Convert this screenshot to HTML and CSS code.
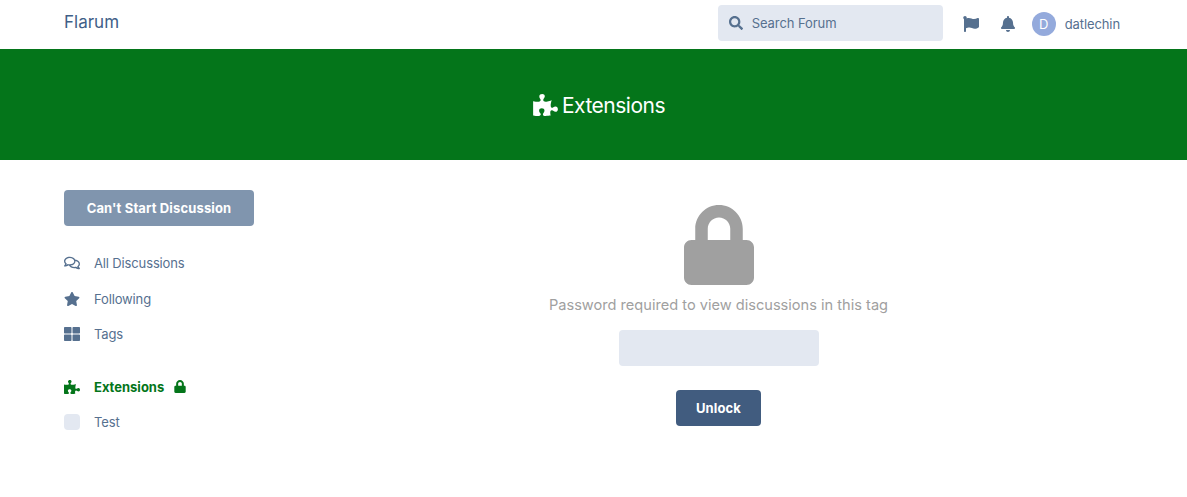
FILE: index.html

```html
<!doctype html>
<html lang="en">
<head>
  <meta charset="UTF-8">
  <title>Extensions - Flarum</title>
  <link rel="stylesheet" href="styles.css">
</head>
<body>
  <header class="header">
    <a class="brand" href="#">Flarum</a>
    <div class="header-right">
      <div class="search">
        <svg class="search-icon" viewBox="0 0 512 512"><path d="M505 442.7L405.3 343c-4.5-4.5-10.6-7-17-7H372c27.6-35.3 44-79.7 44-128C416 93.1 322.9 0 208 0S0 93.1 0 208s93.1 208 208 208c48.3 0 92.7-16.4 128-44v16.3c0 6.4 2.5 12.5 7 17l99.7 99.7c9.4 9.4 24.6 9.4 33.9 0l28.3-28.3c9.4-9.4 9.4-24.6.1-34zM208 336c-70.7 0-128-57.2-128-128 0-70.7 57.2-128 128-128 70.7 0 128 57.2 128 128 0 70.7-57.2 128-128 128z"/></svg>
        <span>Search Forum</span>
      </div>
      <svg class="header-icon flag" viewBox="0 0 512 512"><path d="M349.565 98.783C295.978 98.783 251.721 64 184.348 64c-24.955 0-47.309 4.384-68.045 12.013a55.947 55.947 0 0 0 3.586-23.562C118.117 24.015 94.806 1.206 66.338.048 34.345-1.254 8 24.296 8 56c0 19.026 9.497 35.825 24 45.945V488c0 13.255 10.745 24 24 24h16c13.255 0 24-10.745 24-24v-94.4c28.311-12.064 63.582-22.122 114.435-22.122 53.588 0 97.844 34.783 165.217 34.783 48.169 0 86.667-16.294 122.505-40.858C506.84 359.452 512 349.571 512 339.045v-243.1c0-23.393-24.269-38.87-45.485-29.016-34.338 15.948-76.454 31.854-116.95 31.854z"/></svg>
      <svg class="header-icon bell" viewBox="0 0 448 512"><path d="M224 512c35.32 0 63.97-28.65 63.97-64H160.03c0 35.35 28.65 64 63.97 64zm215.39-149.71c-19.32-20.76-55.47-51.99-55.47-154.29 0-77.7-54.48-139.9-127.94-155.16V32c0-17.67-14.32-32-31.98-32s-31.98 14.33-31.98 32v20.84C118.56 68.1 64.08 130.3 64.08 208c0 102.3-36.15 133.53-55.47 154.29-6 6.45-8.66 14.16-8.61 21.71.11 16.4 12.98 32 32.1 32h383.8c19.12 0 32.01-15.6 32.1-32 .05-7.55-2.61-15.27-8.61-21.71z"/></svg>
      <div class="user">
        <span class="avatar">D</span>
        <span class="username">datlechin</span>
      </div>
    </div>
  </header>

  <section class="hero">
    <h1 class="hero-title">
      <svg class="hero-icon" viewBox="0 0 576 512"><path d="M519.442 288.651c-41.519 0-59.5 31.593-82.058 31.593C377.409 320.244 432 144 432 144s-196.288 80-196.288-3.297c0-35.827 36.288-46.25 36.288-85.985C272 19.216 243.885 0 210.539 0c-34.654 0-66.366 18.891-66.366 56.346 0 41.364 31.711 59.277 31.711 81.75C175.885 207.719 0 166.758 0 166.758v333.237s178.635 41.047 178.635-28.662c0-22.473-40-40.107-40-81.471 0-37.456 29.25-56.346 63.577-56.346 33.673 0 61.788 19.216 61.788 54.717 0 39.735-36.288 50.158-36.288 85.985 0 60.803 129.675 25.73 181.23 25.73 0 0-34.725-120.101 25.827-120.101 35.962 0 46.423 36.152 86.308 36.152C556.712 416 576 387.99 576 354.443c0-34.199-18.962-65.792-56.558-65.792z"/></svg>
      Extensions
    </h1>
  </section>

  <main class="main">
    <aside class="sidebar">
      <button class="start-btn">Can't Start Discussion</button>
      <ul class="nav">
        <li class="nav-item">
          <svg class="nav-icon" viewBox="0 0 576 512"><path d="M532 386.2c27.5-27.1 44-61.1 44-98.2 0-80-76.5-146.1-176.2-157.9C368.3 72.5 294.3 32 208 32 93.1 32 0 103.6 0 192c0 37 16.5 71 44 98.2-15.3 30.7-37.3 54.5-37.7 54.9-6.3 6.7-8.1 16.5-4.4 25 3.6 8.5 12 14 21.2 14 53.5 0 96.7-20.2 125.2-38.8 9.2 2.1 18.7 3.7 28.4 4.9C208.1 407.6 281.8 448 368 448c20.8 0 40.8-2.4 59.8-6.8C456.3 459.7 499.4 480 553 480c9.2 0 17.5-5.5 21.2-14 3.6-8.5 1.9-18.3-4.4-25-.4-.3-22.5-24.1-37.8-54.8zm-392.8-92.3L122.1 305c-14.1 9.1-28.5 16.3-43.1 21.4 2.7-4.7 5.4-9.7 8-14.8l15.5-31.1L77.7 256C64.2 242.6 48 220.7 48 192c0-60.7 73.3-112 160-112s160 51.3 160 112-73.3 112-160 112c-16.5 0-33-1.9-49-5.6l-19.8-4.5zM498.3 352l-24.7 24.4 15.5 31.1c2.6 5.1 5.3 10.1 8 14.8-14.6-5.1-29-12.3-43.1-21.4l-17.1-11.1-19.9 4.6c-16 3.7-32.5 5.6-49 5.6-54 0-102.2-20.1-131.3-49.7C338 339.5 416 272.9 416 192c0-3.4-.4-6.7-.7-10C479.7 196.5 528 238.8 528 288c0 28.7-16.2 50.6-29.7 64z"/></svg>
          All Discussions
        </li>
        <li class="nav-item">
          <svg class="nav-icon" viewBox="0 0 576 512"><path d="M259.3 17.8L194 150.2 47.9 171.5c-26.2 3.8-36.7 36.1-17.7 54.6l105.7 103-25 145.5c-4.5 26.3 23.2 46 46.4 33.7L288 439.6l130.7 68.7c23.2 12.2 50.9-7.4 46.4-33.7l-25-145.5 105.7-103c19-18.5 8.5-50.8-17.7-54.6L382 150.2 316.7 17.8c-11.7-23.6-45.6-23.9-57.4 0z"/></svg>
          Following
        </li>
        <li class="nav-item">
          <svg class="nav-icon" viewBox="0 0 512 512"><path d="M296 32h192c13.255 0 24 10.745 24 24v160c0 13.255-10.745 24-24 24H296c-13.255 0-24-10.745-24-24V56c0-13.255 10.745-24 24-24zm-80 0H24C10.745 32 0 42.745 0 56v160c0 13.255 10.745 24 24 24h192c13.255 0 24-10.745 24-24V56c0-13.255-10.745-24-24-24zM0 296v160c0 13.255 10.745 24 24 24h192c13.255 0 24-10.745 24-24V296c0-13.255-10.745-24-24-24H24c-13.255 0-24 10.745-24 24zm296 184h192c13.255 0 24-10.745 24-24V296c0-13.255-10.745-24-24-24H296c-13.255 0-24 10.745-24 24v160c0 13.255 10.745 24 24 24z"/></svg>
          Tags
        </li>
      </ul>
      <ul class="nav nav-tags">
        <li class="nav-item active">
          <svg class="nav-icon" viewBox="0 0 576 512"><path d="M519.442 288.651c-41.519 0-59.5 31.593-82.058 31.593C377.409 320.244 432 144 432 144s-196.288 80-196.288-3.297c0-35.827 36.288-46.25 36.288-85.985C272 19.216 243.885 0 210.539 0c-34.654 0-66.366 18.891-66.366 56.346 0 41.364 31.711 59.277 31.711 81.75C175.885 207.719 0 166.758 0 166.758v333.237s178.635 41.047 178.635-28.662c0-22.473-40-40.107-40-81.471 0-37.456 29.25-56.346 63.577-56.346 33.673 0 61.788 19.216 61.788 54.717 0 39.735-36.288 50.158-36.288 85.985 0 60.803 129.675 25.73 181.23 25.73 0 0-34.725-120.101 25.827-120.101 35.962 0 46.423 36.152 86.308 36.152C556.712 416 576 387.99 576 354.443c0-34.199-18.962-65.792-56.558-65.792z"/></svg>
          Extensions
          <svg class="nav-lock" viewBox="0 0 448 512"><path d="M400 224h-24v-72C376 68.2 307.8 0 224 0S72 68.2 72 152v72H48c-26.5 0-48 21.5-48 48v192c0 26.5 21.5 48 48 48h352c26.5 0 48-21.5 48-48V272c0-26.5-21.5-48-48-48zm-104 0H152v-72c0-39.7 32.3-72 72-72s72 32.3 72 72v72z"/></svg>
        </li>
        <li class="nav-item">
          <span class="tag-square"></span>
          Test
        </li>
      </ul>
    </aside>

    <div class="content">
      <svg class="big-lock" viewBox="0 0 448 512"><path d="M400 224h-24v-72C376 68.2 307.8 0 224 0S72 68.2 72 152v72H48c-26.5 0-48 21.5-48 48v192c0 26.5 21.5 48 48 48h352c26.5 0 48-21.5 48-48V272c0-26.5-21.5-48-48-48zm-104 0H152v-72c0-39.7 32.3-72 72-72s72 32.3 72 72v72z"/></svg>
      <p class="lock-text">Password required to view discussions in this tag</p>
      <input class="password" type="password">
      <button class="unlock-btn">Unlock</button>
    </div>
  </main>
</body>
</html>
```

FILE: styles.css

```css
* {
  box-sizing: border-box;
}

body {
  margin: 0;
  background: #fff;
  color: #56708f;
  font-family: Inter, "Open Sans", sans-serif;
  font-size: 13px;
}

svg {
  fill: currentColor;
  display: block;
}

.header {
  height: 49px;
  padding: 0 67px 0 64px;
  display: flex;
  justify-content: space-between;
  align-items: center;
}

.brand {
  color: #3f5f88;
  font-size: 17px;
  text-decoration: none;
  margin-top: -5px;
}

.header-right {
  display: flex;
  align-items: center;
  margin-top: -3px;
}

.search {
  width: 225px;
  height: 36px;
  padding-left: 11px;
  background: #e3e8f1;
  border-radius: 4px;
  display: flex;
  align-items: center;
  gap: 9px;
  letter-spacing: -0.08px;
}

.search-icon {
  width: 14px;
  height: 14px;
}

.header-icon {
  height: 16px;
  margin-top: 2px;
}

.flag {
  width: 16px;
  margin-left: 20px;
}

.bell {
  width: 14px;
  margin-left: 22px;
}

.user {
  display: flex;
  align-items: center;
  gap: 9px;
  margin-left: 17px;
  margin-top: 2px;
}

.username {
  letter-spacing: -0.1px;
}

.avatar {
  width: 24px;
  height: 24px;
  border-radius: 50%;
  background: #94aadc;
  color: #fff;
  font-size: 13px;
  display: flex;
  align-items: center;
  justify-content: center;
}

.hero {
  height: 111px;
  padding: 1px 0 0 11px;
  background: #04751a;
  display: flex;
  align-items: center;
  justify-content: center;
}

.hero-title {
  margin: 0;
  color: #fff;
  font-size: 21px;
  font-weight: 400;
  letter-spacing: -0.5px;
  display: flex;
  align-items: center;
  gap: 4px;
}

.hero-icon {
  width: 25px;
  height: 22px;
}

.main {
  padding: 30px 64px 0;
  display: flex;
}

.sidebar {
  width: 190px;
  margin-right: 60px;
  flex-shrink: 0;
}

.start-btn {
  width: 100%;
  height: 36px;
  border: none;
  border-radius: 4px;
  background: #8095ae;
  color: #fff;
  font-family: inherit;
  font-size: 13px;
  font-weight: 700;
  letter-spacing: 0.14px;
}

.nav {
  list-style: none;
  margin: 19.5px 0 0;
  padding: 0;
  letter-spacing: -0.14px;
}

.nav-tags {
  margin-top: 17px;
}

.nav-item {
  height: 35.5px;
  display: flex;
  align-items: center;
}

.nav-icon {
  width: 16px;
  height: 16px;
  margin-right: 14px;
}

.active {
  color: #04751a;
  font-weight: 700;
  letter-spacing: 0;
}

.nav-lock {
  width: 12px;
  height: 13px;
  margin-left: 10px;
}

.tag-square {
  width: 16px;
  height: 16px;
  margin-right: 14px;
  border-radius: 4px;
  background: #e3e8f1;
}

.content {
  flex: 1;
  display: flex;
  flex-direction: column;
  align-items: center;
  padding-top: 15px;
}

.big-lock {
  width: 70px;
  height: 80px;
  color: #a0a0a0;
}

.lock-text {
  margin: 10px 0 0;
  color: #a0a0a0;
  font-size: 14.6px;
  line-height: 20px;
}

.password {
  width: 200px;
  height: 36px;
  margin-top: 15px;
  border: none;
  border-radius: 4px;
  background: #e3e8f1;
}

.unlock-btn {
  width: 85px;
  height: 36px;
  margin-top: 24px;
  border: none;
  border-radius: 4px;
  background: #415c7f;
  color: #fff;
  font-family: inherit;
  font-size: 13px;
  font-weight: 700;
  letter-spacing: 0.14px;
}
```
